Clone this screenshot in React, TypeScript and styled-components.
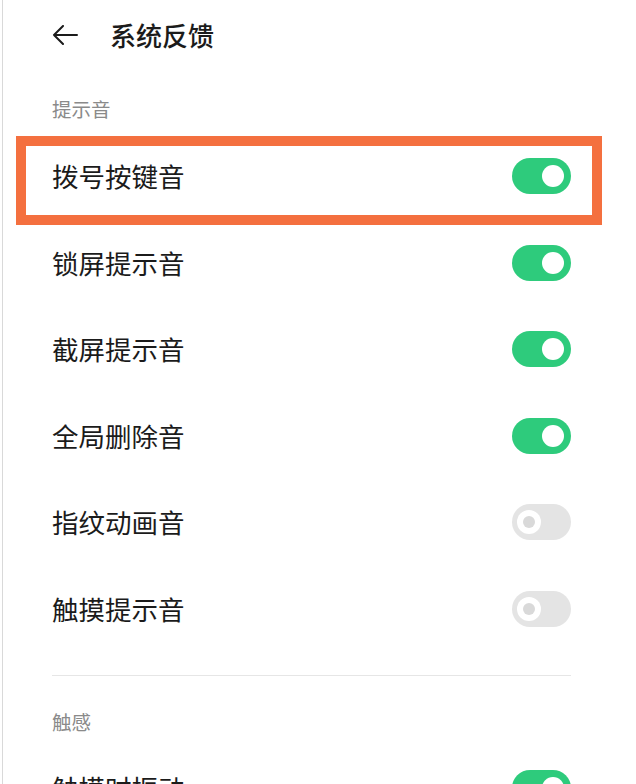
import React from "react";
import styled, { createGlobalStyle, css } from "styled-components";

const GlobalStyle = createGlobalStyle`
  html, body {
    margin: 0;
    padding: 0;
    background: #ffffff;
  }
  body {
    font-family: "Noto Sans CJK SC", "Noto Sans", sans-serif;
    color: #1b1b1b;
  }
`;

const Screen = styled.div`
  margin-left: 2px;
  border-left: 1px solid #d9d9d9;
  height: 784px;
  overflow: hidden;
  padding: 0 65px 0 49px;
  box-sizing: border-box;
  background: #fff;
`;

const Header = styled.header`
  height: 70px;
  display: flex;
  align-items: center;
  gap: 30px;
`;

const BackButton = styled.button`
  border: none;
  background: none;
  padding: 0;
  width: 28px;
  height: 24px;
  display: flex;
  align-items: center;
  color: #1b1b1b;
  cursor: pointer;
`;

const Title = styled.h1`
  margin: 0;
  font-size: 26px;
  font-weight: 500;
  line-height: 36px;
  letter-spacing: 0;
`;

const SectionLabel = styled.div<{ $top: number; $bottom: number }>`
  margin-top: ${(p) => p.$top}px;
  margin-bottom: ${(p) => p.$bottom}px;
  font-size: 19.5px;
  line-height: 28px;
  color: #8a8a8a;
`;

const Row = styled.div`
  position: relative;
  height: 86.5px;
  display: flex;
  align-items: center;
  justify-content: space-between;
`;

const Label = styled.span`
  font-size: 26.5px;
  line-height: 36px;
  color: #1b1b1b;
`;

const Track = styled.div<{ $on: boolean }>`
  position: relative;
  width: 59px;
  height: 36px;
  border-radius: 18px;
  background: ${(p) => (p.$on ? "#2ecb7c" : "#e4e4e4")};
  flex-shrink: 0;
`;

const Knob = styled.span<{ $on: boolean }>`
  position: absolute;
  top: 50%;
  transform: translateY(-50%);
  border-radius: 50%;
  background: #fff;
  ${(p) =>
    p.$on
      ? css`
          right: 7px;
          width: 22px;
          height: 22px;
        `
      : css`
          left: 5px;
          width: 24px;
          height: 24px;
          &::after {
            content: "";
            position: absolute;
            left: 6px;
            top: 6px;
            width: 12px;
            height: 12px;
            border-radius: 50%;
            background: #d9d9d9;
          }
        `}
`;

const Divider = styled.hr`
  margin: 23px 0 0;
  border: none;
  border-top: 1px solid #e6e6e6;
  height: 0;
`;

const Highlight = styled.div`
  position: absolute;
  left: -36px;
  right: -31px;
  top: 3px;
  height: 89px;
  box-sizing: border-box;
  border: 10px solid #f4703f;
  pointer-events: none;
`;

function Switch({ on }: { on: boolean }) {
  return (
    <Track $on={on}>
      <Knob $on={on} />
    </Track>
  );
}

const sounds = [
  { name: "拨号按键音", on: true },
  { name: "锁屏提示音", on: true },
  { name: "截屏提示音", on: true },
  { name: "全局删除音", on: true },
  { name: "指纹动画音", on: false },
  { name: "触摸提示音", on: false },
];

export default function App() {
  return (
    <>
      <GlobalStyle />
      <Screen>
        <Header>
          <BackButton aria-label="返回">
            <svg width="26" height="20" viewBox="0 0 26 20" fill="none">
              <path
                d="M25 10H2M11 1L2 10L11 19"
                stroke="currentColor"
                strokeWidth="2"
                strokeLinecap="round"
                strokeLinejoin="round"
              />
            </svg>
          </BackButton>
          <Title>系统反馈</Title>
        </Header>

        <SectionLabel $top={25} $bottom={10}>提示音</SectionLabel>
        {sounds.map((s, i) => (
          <Row key={s.name}>
            <Label>{s.name}</Label>
            <Switch on={s.on} />
            {i === 0 && <Highlight />}
          </Row>
        ))}

        <Divider />
        <SectionLabel $top={32} $bottom={9}>触感</SectionLabel>
        <Row>
          <Label>触摸时振动</Label>
          <Switch on={true} />
        </Row>
      </Screen>
    </>
  );
}
